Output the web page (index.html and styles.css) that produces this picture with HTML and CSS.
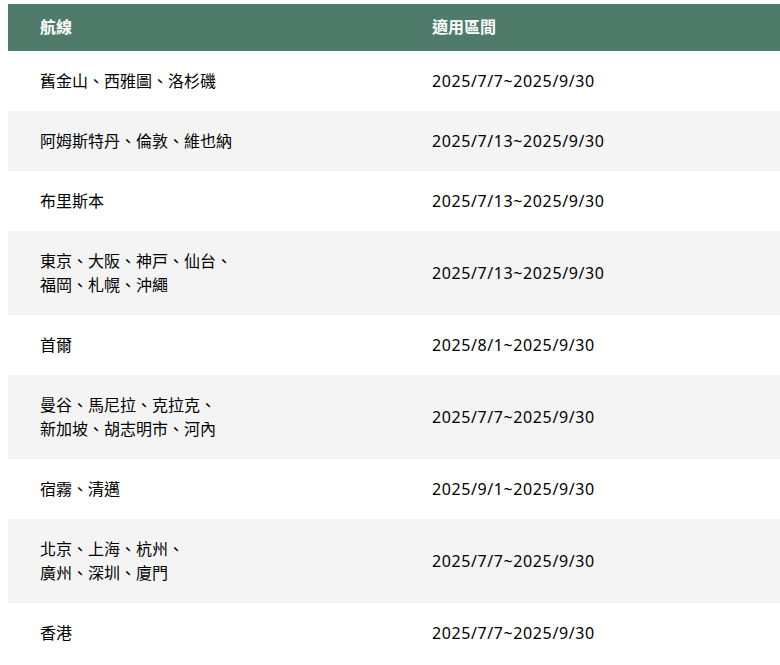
FILE: index.html
```html
<!DOCTYPE html>
<html lang="zh-Hant">
<head>
<meta charset="utf-8">
<title>航線適用區間</title>
<link rel="stylesheet" href="styles.css">
</head>
<body>
<div class="page">
  <table class="routes">
    <thead>
      <tr><th>航線</th><th>適用區間</th></tr>
    </thead>
    <tbody>
      <tr><td>舊金山、西雅圖、洛杉磯</td><td class="date">2025/7/7~2025/9/30</td></tr>
      <tr><td>阿姆斯特丹、倫敦、維也納</td><td class="date">2025/7/13~2025/9/30</td></tr>
      <tr><td>布里斯本</td><td class="date">2025/7/13~2025/9/30</td></tr>
      <tr><td>東京、大阪、神戸、仙台、<br>福岡、札幌、沖繩</td><td class="date">2025/7/13~2025/9/30</td></tr>
      <tr><td>首爾</td><td class="date">2025/8/1~2025/9/30</td></tr>
      <tr><td>曼谷、馬尼拉、克拉克、<br>新加坡、胡志明市、河內</td><td class="date">2025/7/7~2025/9/30</td></tr>
      <tr><td>宿霧、清邁</td><td class="date">2025/9/1~2025/9/30</td></tr>
      <tr><td>北京、上海、杭州、<br>廣州、深圳、廈門</td><td class="date">2025/7/7~2025/9/30</td></tr>
      <tr><td>香港</td><td class="date">2025/7/7~2025/9/30</td></tr>
    </tbody>
  </table>
</div>
</body>
</html>
```
FILE: styles.css
```css
html, body {
  margin: 0;
  padding: 0;
  background: #ffffff;
  overflow: hidden;
}
.page {
  padding: 4px 0 0 8px;
  font-family: "Noto Sans", "Noto Sans CJK TC", sans-serif;
  font-size: 16px;
  color: #000000;
}
.routes {
  width: 784px;
  border-collapse: collapse;
  table-layout: fixed;
}
.routes th {
  background: #4f7c6a;
  color: #ffffff;
  font-weight: 700;
  text-align: left;
  padding: 11px 32px 12px;
  line-height: 24px;
  width: 50%;
}
.routes td {
  padding: 18px 32px;
  line-height: 24px;
  vertical-align: middle;
}
.routes td.date {
  letter-spacing: 0.6px;
}
.routes tbody tr:nth-child(even) td {
  background: #f4f4f4;
}
```
